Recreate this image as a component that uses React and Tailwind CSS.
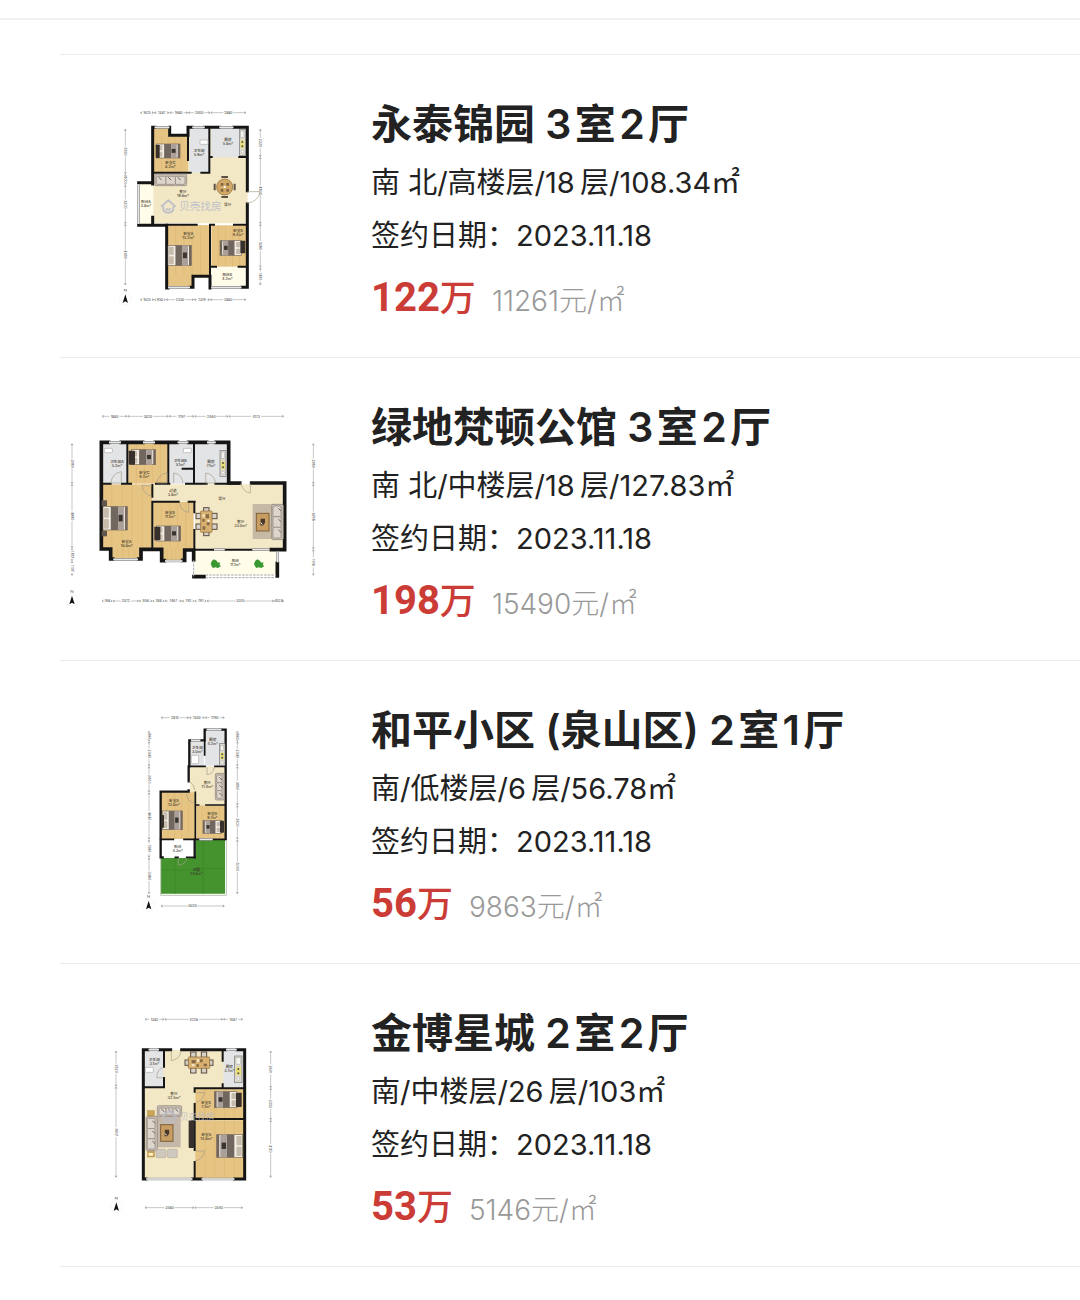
const LISTINGS = [
  {
    id: 1,
    name: "永泰锦园 3\u200a室\u200a2\u200a厅",
    info: "南 北/高楼层/18\u2009层/108.34㎡",
    date: "2023.11.18",
    total: "122",
    unit: "11261",
    plan: PlanYongtai,
  },
  {
    id: 2,
    name: "绿地梵顿公馆 3\u200a室\u200a2\u200a厅",
    info: "南 北/中楼层/18\u2009层/127.83㎡",
    date: "2023.11.18",
    total: "198",
    unit: "15490",
    plan: PlanLvdi,
  },
  {
    id: 3,
    name: "和平小区 (泉山区) 2\u200a室\u200a1\u200a厅",
    info: "南/低楼层/6\u2009层/56.78㎡",
    date: "2023.11.18",
    total: "56",
    unit: "9863",
    plan: PlanHeping,
  },
  {
    id: 4,
    name: "金博星城 2\u200a室\u200a2\u200a厅",
    info: "南/中楼层/26\u2009层/103㎡",
    date: "2023.11.18",
    total: "53",
    unit: "5146",
    plan: PlanJinbo,
  },
];

const WOOD = "#e6c483";
const CREAM = "#f3e8c6";
const TILE = "#e3e4e6";
const BALCONY = "#fffde9";
const WALL = "#151515";

// Floor plan parts. One unit is a third of a pixel.

function Room({ x, y, w, h, fill }) {
  return (
    <g>
      <rect x={x} y={y} width={w} height={h} fill={fill} />
      {fill === WOOD &&
        [0.2, 0.4, 0.6, 0.8].map((p) => (
          <path
            key={p}
            d={`M${x + w * p} ${y}v${h}`}
            stroke="#dab46c"
            strokeWidth="1.5"
          />
        ))}
    </g>
  );
}

function Walls({ d, width = 9 }) {
  return (
    <path
      d={d}
      fill="none"
      stroke={WALL}
      strokeWidth={width}
      strokeLinecap="square"
    />
  );
}

function Windows({ d }) {
  return (
    <g fill="none">
      <path d={d} stroke="#8d8d8d" strokeWidth="8" />
      <path d={d} stroke="#e8e8e8" strokeWidth="4" />
    </g>
  );
}

function Doors({ d }) {
  return <path d={d} fill="none" stroke="#a59d88" strokeWidth="2" />;
}

function Label({ x, y, name, area }) {
  return (
    <text
      textAnchor="middle"
      fontSize="11"
      fill="#3d382e"
      className="font-['Inter','Noto_Sans_CJK_SC',sans-serif] font-medium"
    >
      <tspan x={x} y={y}>
        {name}
      </tspan>
      {area && (
        <tspan x={x} y={y + 12}>
          {area}m²
        </tspan>
      )}
    </text>
  );
}

// Bed with its pillows on the left, or on the right when flipped
function Bed({ x, y, w, h, flip }) {
  return (
    <g transform={flip ? `translate(${x + w} ${y}) scale(-1 1)` : `translate(${x} ${y})`}>
      <rect width={w} height={h} fill="#f1ece4" stroke="#756656" strokeWidth="2" />
      <rect x="3" y="4" width={w * 0.2} height={h / 2 - 6} rx="3" fill="#c7bbab" />
      <rect x="3" y={h / 2 + 2} width={w * 0.2} height={h / 2 - 6} rx="3" fill="#c7bbab" />
      <rect x={w * 0.32} width={w * 0.3} height={h} fill="#72675f" />
      <rect x={w * 0.62} width={w * 0.24} height={h} fill="#aaa099" />
      <rect x={w * 0.64} y={h * 0.35} width={w * 0.17} height={h * 0.28} fill="#39342f" />
      <rect x={w * 0.9} width={w * 0.1} height={h} fill="#75665b" />
    </g>
  );
}

function Tv({ x, y, w, h }) {
  return <rect x={x} y={y} width={w} height={h} rx="2" fill="#37302d" />;
}

function Sofa({ x, y, w, h }) {
  const tall = h > w;
  return (
    <g stroke="#8c8176" strokeWidth="2">
      <rect x={x} y={y} width={w} height={h} rx="4" fill="#c9c0b5" />
      {[0, 1, 2].map((i) => (
        <g key={i}>
          <rect
            x={tall ? x + 4 : x + 5 + (i * (w - 10)) / 3}
            y={tall ? y + 5 + (i * (h - 10)) / 3 : y + 7}
            width={tall ? w - 11 : (w - 10) / 3}
            height={tall ? (h - 10) / 3 : h - 11}
            rx="3"
            fill="#ddd6cd"
          />
          <path
            d={
              tall
                ? `M${x + w - 15} ${y + 12 + (i * (h - 10)) / 3}l8 8`
                : `M${x + 12 + (i * (w - 10)) / 3} ${y + 10}l9 8`
            }
            stroke="#6c635b"
            strokeWidth="3"
          />
        </g>
      ))}
    </g>
  );
}

function Stove({ x, y, w = 18, h = 78 }) {
  return (
    <g>
      <rect x={x} y={y} width={w} height={h} fill="#ded9ce" stroke="#777" strokeWidth="2" />
      <rect x={x + 4} y={y + 5} width={w - 8} height={h * 0.24} fill="#f4f4ef" stroke="#888" />
      <rect x={x + 3} y={y + h * 0.42} width={w - 6} height={h * 0.3} fill="#e9df74" />
      <circle cx={x + w / 2} cy={y + h * 0.49} r="3" fill="#555" />
      <circle cx={x + w / 2} cy={y + h * 0.65} r="3" fill="#555" />
      <circle cx={x + w / 2} cy={y + h * 0.86} r="4" fill="#fff" stroke="#888" />
    </g>
  );
}

function Basin({ x, y, w = 24, h = 13 }) {
  return <rect x={x} y={y} width={w} height={h} rx="2" fill="#fff" stroke="#aaa" strokeWidth="2" />;
}

// Dining table with two chairs on each long side and one at each end
function Dining({ x, y, upright }) {
  return (
    <g transform={upright ? `translate(${x} ${y}) rotate(90)` : `translate(${x} ${y})`}>
      <g fill="#d8d2ca" stroke="#5a4c3e" strokeWidth="3">
        <rect x="-25" y="-32" width="16" height="16" />
        <rect x="7" y="-32" width="16" height="16" />
        <rect x="-25" y="15" width="16" height="16" />
        <rect x="7" y="15" width="16" height="16" />
        <rect x="-42" y="-8" width="12" height="16" />
        <rect x="30" y="-8" width="12" height="16" />
      </g>
      <rect x="-32" y="-17" width="64" height="34" rx="2" fill="#d8b170" stroke="#8c6b3d" strokeWidth="2" />
      <path d="M-22-8h12v10h-12zM2-10h9v9H2zM14 3h10v8H14zM-8 5h8v7h-8z" fill="#866b46" />
      <path d="M-6-10h7v7h-7zM-22 5h9v6h-9z" fill="#f7ead0" />
    </g>
  );
}

function CoffeeTable({ x, y, w, h }) {
  return (
    <g>
      <rect x={x} y={y} width={w} height={h} fill="#c79d62" stroke="#80603a" strokeWidth="3" />
      <path d={`M${x + w / 2 - 6} ${y + h / 2 - 10}h13v12l-6 8h-8z`} fill="#4c382a" />
      <path d={`M${x + w / 2 - 6} ${y + h / 2 + 1}l5 6`} stroke="#fff" strokeWidth="3" />
    </g>
  );
}

function Plant({ x, y }) {
  return (
    <path
      transform={`translate(${x} ${y})`}
      d="M-12-9l6-4 8 4 2 5 9 1-3 6 5 4-9 6-8-2-7 2-4-5-3-8z"
      fill="#399832"
    />
  );
}

// Dimension line: marks holds the ticks, values the numbers between them
function Dimension({ at, marks, values, vertical }) {
  return (
    <g
      transform={vertical ? `translate(${at} 0) rotate(90) scale(1 -1)` : `translate(0 ${at})`}
      stroke="#8f8f8f"
    >
      {marks.slice(1).map((end, i) => {
        const start = marks[i];
        const mid = (start + end) / 2;
        return (
          <g key={end}>
            <path
              d={`M${start + 2} 0H${Math.max(mid - 15, start + 4)}M${Math.min(mid + 15, end - 4)} 0H${end - 2}`}
              strokeWidth="1.5"
            />
            <path
              d={`M${start + 6}-3l-5 3 5 3M${end - 6}-3l5 3-5 3`}
              fill="none"
              strokeWidth="2"
            />
            <text
              x={mid}
              y={4}
              transform={vertical ? "scale(1 -1)" : undefined}
              textAnchor="middle"
              fontSize="10"
              fill="#555"
              stroke="none"
              className="font-['Inter',sans-serif] font-medium"
            >
              {values[i]}
            </text>
          </g>
        );
      })}
    </g>
  );
}

function Compass({ x, y }) {
  return (
    <g transform={`translate(${x} ${y})`}>
      <circle r="18" fill="none" stroke="#e6e6e6" />
      <path d="M0-14L8 12 0 7-8 12z" fill="#111" />
      <path d="M-3-23v-7l6 7v-7" fill="none" stroke="#777" strokeWidth="2" />
    </g>
  );
}

function Watermark({ x, y, size, color }) {
  return (
    <g transform={`translate(${x} ${y})`} opacity="0.8">
      <path
        d="M-22 0L0-19 22 0M-15-1v6Q-15 18 0 18T15 5V-1M-7 5q7 8 14 0"
        fill="none"
        stroke={color}
        strokeWidth="6"
      />
      <text
        x="32"
        y={size / 3}
        fontSize={size}
        fill={color}
        className="font-['Noto_Sans_CJK_SC',sans-serif]"
      >
        贝壳找房
      </text>
    </g>
  );
}

function PlanYongtai() {
  return (
    <svg viewBox="0 0 510 630" className="h-[210px] w-[170px]" aria-label="永泰锦园户型图">
      <Dimension at={38} marks={[90, 132, 178, 234, 301, 409]} values={["1625", "1387", "1680", "2000", "2880"]} />
      <Dimension at={599} marks={[90, 132, 168, 252, 300, 409]} values={["1625", "950", "2530", "1379", "2880"]} />
      <Dimension vertical at={46} marks={[87, 222, 255, 372, 556]} values={["3590", "800", "3200", "4490"]} />
      <Dimension vertical at={451} marks={[87, 171, 372, 503, 556]} values={["2220", "4800", "3280", "1490"]} />
      <Compass x={46} y={597} />

      <path d="M128 80h55v27h50V80h180v290H128z" fill={CREAM} />
      <path d="M130 80h50v28h54v110H130z" fill={WOOD} />
      <Room x={135} y={110} w={98} h={108} fill={WOOD} />
      <Room x={238} y={84} w={60} h={134} fill={TILE} />
      <Room x={304} y={84} w={106} h={88} fill={TILE} />
      <Room x={86} y={250} w={44} h={124} fill={BALCONY} />
      <path d="M170 376h128v150h-50v36h-78z" fill={WOOD} />
      <Room x={172} y={376} w={124} h={148} fill={WOOD} />
      <Room x={304} y={376} w={106} h={124} fill={WOOD} />
      <Room x={304} y={502} w={106} h={58} fill={BALCONY} />

      <Walls d="M128 82h6M179 82v24h55V82h13M284 82h44M370 82h42v190M412 312v250M128 82v170M128 352v22M86 248h42M86 376h84v188h4M240 562h9v-33h51v35M396 562h16" />
      <Walls width={6} d="M130 218h112M274 218h24V84M234 106v74M302 171h3M388 171h22M170 374h90M300 374v186M300 374h12M372 374h38M304 500h14M386 500h24" />
      <Windows d="M134 82h44M247 82h37M328 82h42M86 254v118M174 562h66M304 562h90" />
      <Doors d="M412 275h38q-3 28-38 35" />

      <Bed x={140} y={132} w={70} h={42} />
      <Tv x={137} y={134} w={12} h={40} />
      <Basin x={270} y={120} />
      <Stove x={388} y={88} />
      <Sofa x={134} y={222} w={96} h={35} />
      <g transform="translate(344 261)">
        <path d="M-10-30h20M-10 30h20M-30-10v20M30-10v20" stroke="#5d5144" strokeWidth="6" />
        <circle r="24" fill="#d4a865" stroke="#a3824f" strokeWidth="3" />
        <path d="M-12-12h8v8h-8zM5-12h8v8H5zM-12 6h8v8h-8zM5 6h8v8H5z" fill="#7f6749" />
        <path d="M-3-3h6v6h-6z" fill="#fff" />
      </g>
      <Bed x={174} y={436} w={70} h={61} />
      <Bed x={330} y={422} w={64} h={44} flip />
      <Tv x={391} y={422} w={15} h={38} />
      <Watermark x={175} y={320} size={32} color="#b4b9cc" />

      <Label x={181} y={193} name="卧室C" area="8.2" />
      <Label x={267} y={157} name="卫生间" area="5.9" />
      <Label x={354} y={123} name="厨房" area="5.8" />
      <Label x={219} y={280} name="客厅" area="19.6" />
      <Label x={353} y={318} name="餐厅" />
      <Label x={108} y={308} name="阳台A" area="3.8" />
      <Label x={235} y={405} name="卧室A" area="15.2" />
      <Label x={384} y={396} name="卧室B" area="9.4" />
      <Label x={352} y={528} name="阳台B" area="4.2" />
    </svg>
  );
}

function PlanLvdi() {
  return (
    <svg viewBox="0 -6 810 630" className="h-[210px] w-[270px]" aria-label="绿地梵顿公馆户型图">
      <Dimension at={34} marks={[125, 202, 326, 403, 505, 672]} values={["1880", "3020", "1797", "2460", "4173"]} />
      <Dimension at={588} marks={[125, 158, 237, 277, 314, 366, 404, 440, 642, 672]} values={["768", "2072", "958", "788", "1467", "792", "791", "5205", "1520"]} />
      <Dimension vertical at={36} marks={[115, 237, 430, 468, 512]} values={["2980", "4680", "1797", "1107"]} />
      <Dimension vertical at={760} marks={[115, 237, 433, 512]} values={["2980", "4798", "1916"]} />
      <Compass x={36} y={586} />

      <Room x={124} y={112} w={76} h={124} fill={TILE} />
      <Room x={205} y={112} w={120} h={124} fill={WOOD} />
      <Room x={329} y={112} w={72} h={124} fill={TILE} />
      <Room x={405} y={112} w={98} h={124} fill={TILE} />
      <path d="M278 238h397v196H405V290H278z" fill={CREAM} />
      <Room x={125} y={238} w={152} h={194} fill={WOOD} />
      <Room x={154} y={430} w={86} h={33} fill={WOOD} />
      <Room x={280} y={291} w={121} h={142} fill={WOOD} />
      <Room x={309} y={430} w={64} h={36} fill={WOOD} />
      <Room x={405} y={438} w={247} h={72} fill={BALCONY} />

      <Walls width={11} d="M124 112h22M184 112h64M286 112h66M386 112h54M468 112h38v122h33M575 234h99v200h-40M124 112v320h28v30h6M236 462h7v-29h62v34h8M368 466h6v-31h27M401 440v24M402 515h30M652 475v38" />
      <Walls width={6} d="M202 116v120M325 116v120M402 116v120M124 236h28M186 236h27M288 236h40M378 236h62M466 236h70M277 240v35M277 290v142M280 290h76M386 290h18M403 292v30M403 375v58M405 434h56M494 434h82M368 191h34" />
      <Windows d="M147 112h36M249 112h36M353 112h32M441 112h26M160 463h74M315 468h52M653 440v32M462 434h32M577 434h50" />
      <path d="M401 466v48M436 510h212M436 518h212" stroke="#aaa" strokeWidth="3" strokeDasharray="8 3" />
      <Doors d="M184 234v-34q-26 3-32 34zM321 234v-30q-25 2-31 30zM341 234v-30q25 2 28 30M437 234v-30q24 2 30 30zM571 236v28q-18 0-29-28M276 242h-30q3 24 30 32M386 294v28q-24-2-27-28" />

      <Basin x={133} y={130} />
      <Basin x={370} y={130} />
      <Bed x={214} y={134} w={73} h={45} />
      <Tv x={206} y={137} w={19} h={42} />
      <Stove x={480} y={136} />
      <rect x="125" y="286" width="16" height="17" fill="#60564b" />
      <rect x="125" y="377" width="16" height="17" fill="#60564b" />
      <Bed x={129} y={305} w={73} h={70} />
      <Bed x={290} y={363} w={72} h={45} />
      <Tv x={283} y={365} w={18} h={41} />
      <Dining x={439} y={350} upright />
      <rect x="578" y="297" width="78" height="105" fill="#c7baa5" />
      <CoffeeTable x={589} y={325} w={38} h={53} />
      <Sofa x={635} y={298} w={35} h={106} />
      <Plant x={468} y={476} />
      <Plant x={598} y={476} />

      <Label x={171} y={173} name="卫生间A" area="5.2" />
      <Label x={253} y={207} name="卧室C" area="9.7" />
      <Label x={361} y={170} name="卫生间B" area="5.1" />
      <Label x={453} y={173} name="厨房" area="7.1" />
      <Label x={339} y={261} name="过道" area="3.8" />
      <Label x={486} y={286} name="餐厅" />
      <Label x={542} y={355} name="客厅" area="33.0" />
      <Label x={200} y={415} name="卧室A" area="16.8" />
      <Label x={330} y={328} name="卧室B" area="11.1" />
      <Label x={526} y={470} name="阳台" area="11.1" />
    </svg>
  );
}

function PlanHeping() {
  return (
    <svg viewBox="0 3 390 630" className="h-[210px] w-[130px]" aria-label="和平小区户型图">
      <Dimension at={38} marks={[92, 177, 224, 284]} values={["2810", "1300", "1790"]} />
      <Dimension at={603} marks={[92, 284]} values={["6020"]} />
      <Dimension vertical at={57} marks={[78, 109, 184, 262, 404, 458, 567]} values={["960", "2340", "2900", "4640", "1580", "3380"]} />
      <Dimension vertical at={322} marks={[78, 109, 184, 301, 404, 567]} values={["960", "2340", "3950", "3300", "5000"]} />
      <Compass x={56} y={601} />

      <Room x={178} y={110} w={44} h={72} fill={TILE} />
      <Room x={225} y={75} w={60} h={107} fill={TILE} />
      <Room x={180} y={184} w={105} h={116} fill={CREAM} />
      <Room x={93} y={262} w={103} h={140} fill={WOOD} />
      <Room x={199} y={301} w={88} h={101} fill={WOOD} />
      <Room x={93} y={405} w={102} h={52} fill="#fff" />
      <path d="M197 405h88v161H93V459h104z" fill="#45932e" />
      <path d="M135 459v107M220 405v161M197 490h88M93 495h127" stroke="#3d8a27" strokeWidth="3" />
      <path d="M92 460v111h197V408" fill="none" stroke="#b9c6b2" strokeWidth="3" />

      <Walls width={7} d="M178 184v-78h4M212 106h12V74h5M275 74h12v31M287 107v295M176 184v45M176 256v4H92v197M92 457h6M194 457v-52" />
      <Walls width={5} d="M224 108v42M178 184h47M255 184h30M196 262v140M198 300h8M228 300h58M92 403h38M162 403h46M248 403h38M136 457h8M170 457h25" />
      <Windows d="M183 106h28M230 74h44M208 403h40" />
      <Doors d="M231 186v23q19-2 22-23M176 230q15 4 18 25M194 295q-24-7-25-28M145 459v22q22-3 25-22" />

      <Basin x={184} y={151} w={22} h={25} />
      <Stove x={268} y={116} w={17} h={65} />
      <Sofa x={256} y={205} w={27} h={80} />
      <Bed x={97} y={318} w={60} h={56} />
      <Tv x={94} y={330} w={8} h={38} />
      <Bed x={219} y={347} w={55} h={38} flip />
      <Tv x={270} y={347} w={12} h={36} />

      <Label x={202} y={131} name="卫生间" area="3.0" />
      <Label x={248} y={109} name="厨房" area="4.2" />
      <Label x={232} y={237} name="客厅" area="11.4" />
      <Label x={132} y={290} name="卧室A" area="13.0" />
      <Label x={247} y={329} name="卧室B" area="9.7" />
      <Label x={143} y={428} name="阳台" area="4.3" />
      <Label x={199} y={497} name="花园" area="24.6" />
    </svg>
  );
}

function PlanJinbo() {
  return (
    <svg viewBox="0 -3 570 630" className="h-[210px] w-[190px]" aria-label="金博星城户型图">
      <Dimension at={28} marks={[134, 193, 369, 429]} values={["1382", "4228", "1487"]} />
      <Dimension at={593} marks={[134, 283, 429]} values={["3580", "3540"]} />
      <Dimension vertical at={48} marks={[122, 230, 503]} values={["2520", "6617"]} />
      <Dimension vertical at={512} marks={[122, 234, 330, 503]} values={["2601", "2202", "4170"]} />
      <Compass x={49} y={591} />

      <Room x={132} y={120} w={300} h={384} fill={CREAM} />
      <Room x={134} y={122} w={56} h={110} fill={TILE} />
      <Room x={370} y={122} w={62} h={110} fill={TILE} />
      <Room x={286} y={238} w={146} h={88} fill={WOOD} />
      <Room x={286} y={331} w={146} h={174} fill={WOOD} />

      <Walls d="M130 119h15M178 119h34M245 119h132M411 119h23v388M130 119v388h8M278 507h26M404 507h30" />
      <Walls width={6} d="M192 122v48M192 204v28h-60M368 122v30M368 223v10M284 235h146M284 235v10M284 282v138M284 456v50M284 327h148" />
      <Windows d="M146 119h31M378 119h32M139 507h138M305 507h98" />
      <Doors d="M214 122v30q26-5 29-28M190 203h-20q1-25 20-31M286 278q23-6 28-30h-28M286 453q24-5 28-30h-28" />

      <Basin x={136} y={172} w={24} h={15} />
      <Dining x={297} y={158} />
      <Stove x={404} y={138} w={22} h={80} />
      <rect x="166" y="316" width="76" height="96" fill="#c4b8aa" />
      <Sofa x={172} y={287} w={73} h={32} />
      <Sofa x={138} y={320} w={34} h={102} />
      <rect x="143" y="302" width="20" height="16" fill="#cba456" stroke="#8d6d35" />
      <rect x="143" y="424" width="20" height="17" fill="#cba456" stroke="#8d6d35" />
      <rect x="146" y="429" width="13" height="8" fill="#fff4ca" />
      <rect x="168" y="418" width="30" height="25" rx="4" fill="#cfc8be" stroke="#8e857b" />
      <rect x="202" y="418" width="30" height="25" rx="4" fill="#cfc8be" stroke="#8e857b" />
      <CoffeeTable x={182} y={344} w={37} h={50} />
      <Tv x={266} y={331} w={17} h={83} />
      <Bed x={343} y={245} w={68} h={48} flip />
      <Tv x={408} y={248} w={17} h={43} />
      <Bed x={350} y={374} w={78} h={68} flip />
      <Watermark x={208} y={321} size={26} color="#bdbcc8" />

      <Label x={163} y={154} name="卫生间" area="3.1" />
      <Label x={388} y={173} name="厨房" area="3.7" />
      <Label x={222} y={256} name="客厅" area="32.5" />
      <Label x={318} y={283} name="卧室B" area="7.7" />
      <Label x={319} y={377} name="卧室A" area="14.8" />
    </svg>
  );
}

function Listing({ listing }) {
  const Plan = listing.plan;
  return (
    <li className="flex border-b border-[#ebebeb]">
      <div className="flex w-[270px] shrink-0 justify-center pt-[45px]">
        <Plan />
      </div>
      <div className="ml-[41px] min-w-0 flex-1 pt-[41px] pb-[28px]">
        <h2 className="text-[41px] leading-[56px] font-semibold">{listing.name}</h2>
        <div className="mt-1 text-[29px] leading-[53px]">
          <p>{listing.info}</p>
          <p>签约日期：{listing.date}</p>
        </div>
        <p className="mt-2 flex items-baseline gap-4 leading-[56px]">
          <strong className="font-['Roboto','Noto_Sans_CJK_SC',sans-serif] text-[40px] font-bold text-[#cb3c37]">
            {listing.total}
            <span className="text-[36px] font-medium">万</span>
          </strong>
          <span className="text-[28px] font-light text-[#999999]">
            {listing.unit}元/㎡
          </span>
        </p>
      </div>
    </li>
  );
}

export default function App() {
  return (
    <main className="min-h-screen bg-white pt-[18px] font-['Inter','Noto_Sans_CJK_SC',sans-serif] text-[#222222]">
      <div className="h-[2px] bg-[#f0f0f0]" />
      <ul className="mt-[34px] ml-[60px] border-t border-[#ebebeb]">
        {LISTINGS.map((listing) => (
          <Listing key={listing.id} listing={listing} />
        ))}
      </ul>
    </main>
  );
}
